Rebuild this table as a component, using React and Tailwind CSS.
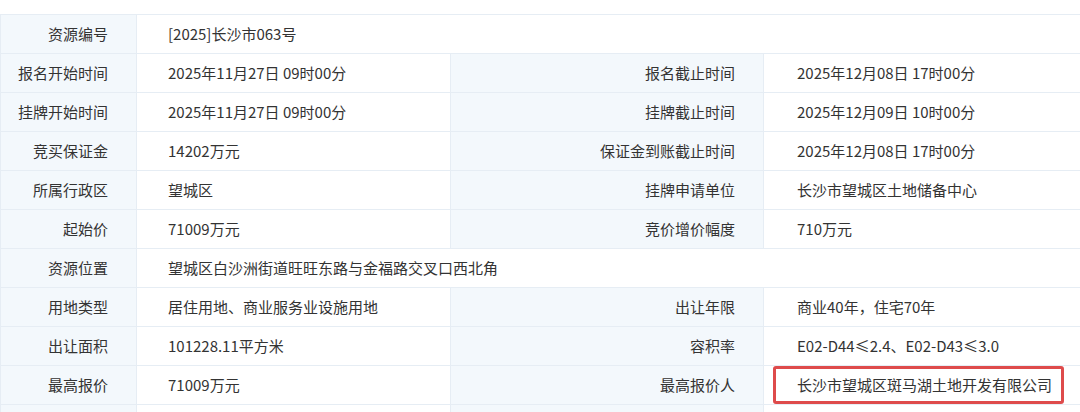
const rows = [
  { l1: '资源编号', v1: '[2025]长沙市063号', span: true },
  { l1: '报名开始时间', v1: '2025年11月27日 09时00分', l2: '报名截止时间', v2: '2025年12月08日 17时00分' },
  { l1: '挂牌开始时间', v1: '2025年11月27日 09时00分', l2: '挂牌截止时间', v2: '2025年12月09日 10时00分' },
  { l1: '竞买保证金', v1: '14202万元', l2: '保证金到账截止时间', v2: '2025年12月08日 17时00分' },
  { l1: '所属行政区', v1: '望城区', l2: '挂牌申请单位', v2: '长沙市望城区土地储备中心' },
  { l1: '起始价', v1: '71009万元', l2: '竞价增价幅度', v2: '710万元' },
  { l1: '资源位置', v1: '望城区白沙洲街道旺旺东路与金福路交叉口西北角', span: true },
  { l1: '用地类型', v1: '居住用地、商业服务业设施用地', l2: '出让年限', v2: '商业40年，住宅70年' },
  { l1: '出让面积', v1: '101228.11平方米', l2: '容积率', v2: 'E02-D44≤2.4、E02-D43≤3.0' },
  { l1: '最高报价', v1: '71009万元', l2: '最高报价人', v2: '长沙市望城区斑马湖土地开发有限公司', mark: true },
  { l1: '', v1: '', l2: '', v2: '' },
];

const label = 'bg-[#f3f8fc] text-right pr-[28px] border border-[#e6edf4]';
const value = 'bg-white text-left border border-[#e6edf4]';

export default function App() {
  return (
    <div
      className="w-[1080px] h-[412px] overflow-hidden bg-white pt-[14px] text-[15px] text-[#333333]"
      style={{ fontFamily: '"Noto Sans CJK SC", "Noto Sans", sans-serif' }}
    >
      <table className="w-[1080px] table-fixed border-collapse">
        <colgroup>
          <col className="w-[136px]" />
          <col className="w-[314px]" />
          <col className="w-[313px]" />
          <col className="w-[317px]" />
        </colgroup>
        <tbody>
          {rows.map((r, i) => (
            <tr key={i} className="h-[39px]">
              <td className={label}>{r.l1}</td>
              {r.span ? (
                <td colSpan={3} className={value + ' pl-[31px]'}>{r.v1}</td>
              ) : (
                <>
                  <td className={value + ' pl-[31px]'}>{r.v1}</td>
                  <td className={label}>{r.l2}</td>
                  <td className={value + ' pl-[33px] relative'}>
                    {r.v2}
                    {r.mark && (
                      <div className="absolute left-[9px] top-0 w-[291px] h-[38px] border-[3px] border-[#de4b4b] rounded-[3px]" />
                    )}
                  </td>
                </>
              )}
            </tr>
          ))}
        </tbody>
      </table>
    </div>
  );
}
